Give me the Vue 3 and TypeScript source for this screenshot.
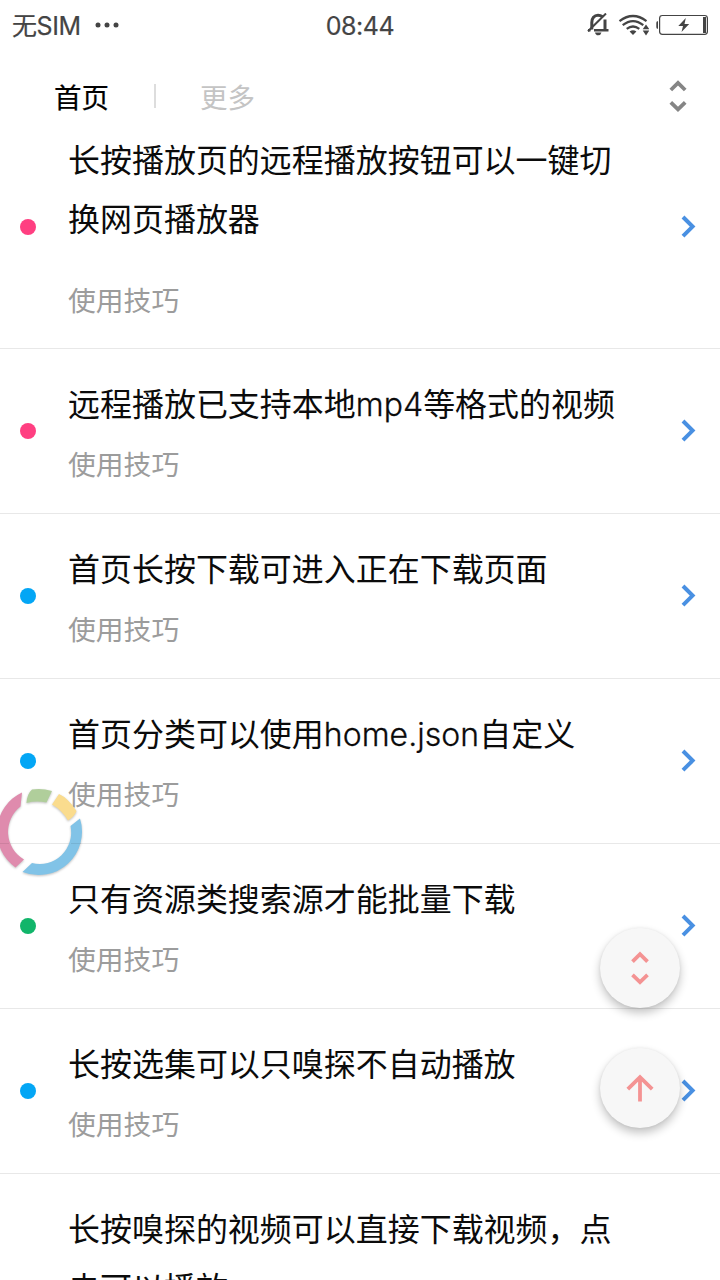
<script setup lang="ts">
interface Part {
  text: string
  latin?: 'mp4' | 'json'
}
interface Tip {
  lines: Part[][]
  color: string
}

const pink = '#ff3f81'
const blue = '#03a6f5'
const green = '#11b56a'

const tips: Tip[] = [
  { lines: [[{ text: '长按播放页的远程播放按钮可以一键切' }], [{ text: '换网页播放器' }]], color: pink },
  { lines: [[{ text: '远程播放已支持本地' }, { text: 'mp4', latin: 'mp4' }, { text: '等格式的视频' }]], color: pink },
  { lines: [[{ text: '首页长按下载可进入正在下载页面' }]], color: blue },
  { lines: [[{ text: '首页分类可以使用' }, { text: 'home.json', latin: 'json' }, { text: '自定义' }]], color: blue },
  { lines: [[{ text: '只有资源类搜索源才能批量下载' }]], color: green },
  { lines: [[{ text: '长按选集可以只嗅探不自动播放' }]], color: blue },
  { lines: [[{ text: '长按嗅探的视频可以直接下载视频，点' }], [{ text: '击可以播放' }]], color: pink },
]
</script>

<template>
  <div class="screen">
    <header class="top">
      <div class="status">
        <div class="carrier">
          <span>无SIM</span>
          <svg width="26" height="6" viewBox="0 0 26 6" fill="#444"><circle cx="3" cy="3" r="2.5" /><circle cx="12" cy="3" r="2.5" /><circle cx="21" cy="3" r="2.5" /></svg>
        </div>
        <div class="clock">08:44</div>
        <div class="signals">
          <svg width="24" height="26" viewBox="587 13 24 26" fill="none" stroke="#444" stroke-width="2">
            <path d="M591.8 29.5V22.5C591.8 18.2 594.2 15.2 598 15.2C599.8 15.2 601.2 15.7 602.3 16.5M605 19.5V29" stroke-width="3" />
            <path d="M588 30.2H590.5M594 30.2H608.5" stroke-width="2.6" />
            <path d="M606 13.5L588 31.3" />
            <path d="M595 32.4H601.5Q600.8 35.2 598.2 35.2Q595.6 35.2 595 32.4Z" fill="#444" stroke="none" />
          </svg>
          <svg width="32" height="24" viewBox="617 13 32 24" fill="none" stroke="#444" stroke-width="2.2">
            <path d="M619.5 20.2Q633 9.8 646.5 20.2M622.7 24.2Q633 16 643.3 24.2M626.7 27.8Q633 23.2 639.3 27.8" />
            <path d="M629.6 30.4Q633 28.3 636.4 30.4L633 34Z" fill="#444" stroke="none" />
            <path d="M646 23.4L649.3 28.2H642.7ZM642.7 29.6H649.3L646 34.4Z" fill="#444" stroke="none" />
          </svg>
          <svg width="54" height="24" viewBox="655 13 54 24">
            <path d="M658 20.2H657.4Q656.3 20.2 656.3 22V26Q656.3 27.8 657.4 27.8H658Z" fill="#444" />
            <rect x="659.6" y="14.5" width="47.8" height="18.8" rx="2.8" fill="none" stroke="#444" stroke-width="1.2" />
            <rect x="703" y="16" width="3" height="16" fill="#444" />
            <path d="M685.8 17L678.3 25H683L681.5 31L689.2 22.9H684.5Z" fill="#444" />
          </svg>
        </div>
      </div>
      <nav class="tabs">
        <span class="tab active">首页</span>
        <i class="divider"></i>
        <span class="tab">更多</span>
        <svg class="sorter" width="20" height="34" viewBox="0 0 20 34" fill="none" stroke="#858585" stroke-width="3.8"><path d="M2.8 11L10 3.9L17.2 11M2.8 23.4L10 30.4L17.2 23.4" /></svg>
      </nav>
    </header>

    <main class="list">
      <section v-for="(tip, i) in tips" :key="i" class="row">
        <i class="dot" :style="{ background: tip.color }"></i>
        <div class="body">
          <div class="title" :class="{ multi: tip.lines.length > 1 }">
            <div v-for="(line, j) in tip.lines" :key="j" class="line">
              <span v-for="(part, k) in line" :key="k" :class="part.latin">{{ part.text }}</span>
            </div>
          </div>
          <div class="kind">使用技巧</div>
        </div>
        <svg class="go" width="16" height="24" viewBox="0 0 16 24" fill="none" stroke="#4990e2" stroke-width="4"><path d="M3 2L12.6 11.6L3 21.2" /></svg>
      </section>
    </main>

    <svg class="ring" width="88" height="96" viewBox="0 784 88 96">
      <g class="ring-parts">
        <path d="M22 792.5A43.5 43.5 0 0 0 15.5 867.5L24 859.5A32 32 0 0 1 20.5 806.5Z" fill="#df8bad" />
        <path d="M26.5 803Q27 794 32 789.5Q42 788 52 791L46.5 802.5Q36 800.5 26.5 803Z" fill="#b0ce9b" />
        <path d="M59 794Q68 798 76.5 811Q75 816 68 820.5Q62 810 52 804.5Z" fill="#fadc8e" />
        <path d="M80 818.5A43.5 43.5 0 0 1 22.5 872L32 863A31.5 31.5 0 0 0 70.5 826Z" fill="#81c3e7" />
      </g>
      <path d="M0 843.5H9M71 843.5H81" stroke="#000" stroke-opacity="0.08" />
    </svg>
    <div class="fabs">
      <button class="fab">
        <svg width="20" height="36" viewBox="0 0 20 36" fill="none" stroke="#f49393" stroke-width="3.8"><path d="M2.5 11.6L10 4.2L17.5 11.6M2.5 24.8L10 32L17.5 24.8" /></svg>
      </button>
      <button class="fab">
        <svg width="30" height="30" viewBox="0 0 30 30" fill="none" stroke="#f49393" stroke-width="3.8"><path d="M2.8 16.2L15 4.2L27.2 16.2M15 4V28.4" /></svg>
      </button>
    </div>
  </div>
</template>

<style>
body {
  margin: 0;
  overflow: hidden;
}
</style>

<style scoped>
.screen {
  position: relative;
  width: 720px;
  height: 1280px;
  overflow: hidden;
  background: #fff;
  color: #0b0b0b;
  font-family: "Noto Sans CJK SC", sans-serif;
}
.top {
  height: 144px;
}
.status {
  height: 50px;
  display: grid;
  grid-template-columns: 1fr auto 1fr;
  align-items: center;
  color: #444;
  font: 25px/50px Inter, "Noto Sans CJK SC", sans-serif;
}
.carrier {
  display: flex;
  align-items: center;
  gap: 14px;
  padding-left: 12px;
  letter-spacing: -0.4px;
  -webkit-text-stroke: 0.2px #444;
}
.carrier svg {
  margin-bottom: 2px;
}
.clock {
  letter-spacing: -0.4px;
  padding-top: 1px;
  -webkit-text-stroke: 0.2px #444;
}
.signals {
  display: flex;
  justify-content: flex-end;
  align-items: center;
  gap: 6px;
  padding-right: 11px;
}
.tabs {
  height: 92px;
  display: flex;
  align-items: center;
  padding: 0 32px 0 54px;
}
.tab {
  font-size: 27.5px;
  line-height: 40px;
  color: #c4c4c4;
}
.tab.active {
  color: #000;
  -webkit-text-stroke: 0.2px #000;
}
.divider {
  width: 2px;
  height: 24px;
  margin: 0 44px 0 45px;
  background: #ddd;
}
.sorter {
  margin-left: auto;
}
.list {
  height: 1136px;
  overflow: hidden;
  display: flex;
  flex-direction: column;
}
.row {
  flex: none;
  box-sizing: border-box;
  min-height: 165px;
  display: flex;
  align-items: center;
  padding: 0 24px 0 20px;
  border-bottom: 1px solid #e8e8e8;
}
.row:first-child {
  margin-top: -39px;
}
.dot {
  flex: none;
  width: 16px;
  height: 16px;
  border-radius: 50%;
}
.body {
  flex: 1;
  align-self: flex-start;
  padding: 23px 0 20px 32px;
}
.title {
  font-size: 31.97px;
  line-height: 60px;
  white-space: nowrap;
}
.title.multi {
  padding-bottom: 21px;
}
.line {
  height: 60px;
}
.title.multi .line + .line {
  margin-top: -1px;
}
.mp4,
.json {
  font-family: Inter, sans-serif;
  font-weight: 300;
  line-height: 0;
  letter-spacing: 0.05px;
  -webkit-text-stroke: 0.3px #0b0b0b;
}
.kind {
  margin-top: 1px;
  font-size: 27.8px;
  line-height: 60px;
  height: 59px;
  color: #9c9c9c;
}
.go {
  flex: none;
}
.ring {
  position: absolute;
  left: 0;
  top: 784px;
}
.ring-parts {
  filter: drop-shadow(0 1px 1px rgba(0, 0, 0, 0.25));
}
.fabs {
  position: absolute;
  left: 600px;
  top: 928px;
  display: flex;
  flex-direction: column;
  gap: 40px;
}
.fab {
  width: 80px;
  height: 80px;
  padding: 0;
  border: 0;
  border-radius: 50%;
  background: #f7f7f7;
  box-shadow: 0 5px 10px rgba(0, 0, 0, 0.24), 0 0 3px rgba(0, 0, 0, 0.07);
  display: flex;
  align-items: center;
  justify-content: center;
}
</style>
